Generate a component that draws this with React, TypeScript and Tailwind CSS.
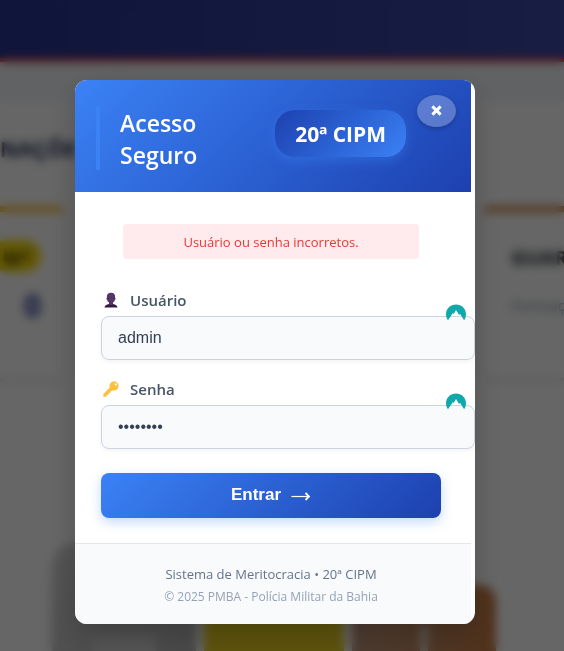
import React from "react";

function VpnBadge() {
  return (
    <svg className="pointer-events-none absolute -top-3 right-[9px] h-5 w-5" viewBox="0 0 20 20" aria-hidden="true">
      <path
        d="M2 16.200C.8 14.500 0 12.400 0 10.200 0 4.800 4.500 .6 10 .6s10 4.200 10 9.600c0 2.200-.7 4.300-1.900 6L14 9.800l-.9 1.500-1-2L10 6 7.800 9.900l-1-.8-.9 1.400z"
        fill="#0fa9a9"
      />
    </svg>
  );
}

function UserIcon() {
  return (
    <svg className="h-4 w-4 shrink-0" viewBox="0 0 16 16" aria-hidden="true">
      <path d="M1.500 15.500c.2-2 1.800-3.200 4.600-3.600h3.800c2.800.4 4.400 1.600 4.600 3.600z" fill="#321b41" />
      <path d="M8 .8c2.700 0 4.100 1.500 4.100 3.800v1.200c.7.3.6 1.800-.2 2-.3 1.300-.9 2.200-1.900 2.800v1.700L8 13.300l-2-1V10.600C5.100 10 4.400 9.100 4.100 7.800c-.8-.2-.9-1.700-.2-2V4.600C3.900 2.300 5.300.8 8 .8z" fill="#533566" />
    </svg>
  );
}

function KeyIcon() {
  return (
    <svg className="h-4 w-4 shrink-0" viewBox="0 0 16 16" aria-hidden="true">
      <path
        fillRule="evenodd"
        d="M11.200.2a4.700 4.700 0 0 0-4.400 6.300L.4 12.900v2.300c0 .4.300.6.600.6h2l.6-1.300 1.500-.4.400-1.600 1.700-.4.300-1.500 2-1.200A4.700 4.700 0 1 0 11.200.2zm1.600 2.100a1.100 1.100 0 1 1 0 2.200 1.100 1.100 0 0 1 0-2.200z"
        fill="#fcc03c"
      />
    </svg>
  );
}

function ArrowIcon() {
  return (
    <svg className="mt-[3px] h-3 w-5" viewBox="0 0 20 12" fill="none" stroke="white" aria-hidden="true">
      <path d="M.5 6.500H18" strokeWidth="1.200" />
      <path d="M14.500 3 18 6.500 14.500 10" strokeWidth="1.800" />
    </svg>
  );
}

function Backdrop() {
  return (
    <div className="h-screen overflow-hidden bg-white" aria-hidden="true">
      <div className="h-[62px] border-b-4 border-[#d32f2f] bg-linear-to-r from-[#283593] to-[#3c4ba8]" />
      <div className="h-10 bg-[#f1f5f9]" />
      <div className="flex h-[104px] pt-8">
        <div className="text-[22px] leading-7 font-bold text-[#1e2f55]">NAÇÕE</div>
      </div>
      <div className="flex justify-center gap-4 pr-4">
        <div className="flex h-[172px] w-[386px] flex-none flex-col items-end rounded-lg border-t-6 border-[#fbc02d] bg-white px-6 pt-7 shadow-md">
          <span className="rounded-full bg-[#f9dc0b] px-3 py-1 text-base font-bold text-[#3d3600]">igr!</span>
          <b className="pt-4 text-3xl text-[#303f9f]">0</b>
        </div>
        <div className="h-[172px] w-[386px] flex-none rounded-lg border-t-6 border-[#9e9e9e] bg-white shadow-md" />
        <div className="h-[172px] w-[386px] flex-none rounded-lg border-t-6 border-[#cd853f] bg-white px-7 pt-8 shadow-md">
          <b className="block text-xl text-[#263238]">GUAR</b>
          <span className="block pt-6 text-sm text-[#78909c]">Pontuaç</span>
        </div>
      </div>
      <div className="flex h-[273px] items-end justify-center gap-2 pr-4">
        <div className="h-[108px] w-[144px] rounded-t-3xl bg-linear-135 from-[#d4d4d4] to-[#b4b4b4] px-10 pt-[92px] shadow-xl">
          <div className="h-4 bg-[#d0d0d0]" />
        </div>
        <div className="h-[148px] w-[140px] rounded-t-2xl bg-[#e6cf20]" />
        <div className="flex h-[66px] w-[144px] justify-center rounded-t-2xl bg-linear-to-r from-[#bd947b] to-[#c97c42] pt-10">
          <div className="h-7 w-2 bg-[#ddd0c5]" />
        </div>
      </div>
    </div>
  );
}

type FieldProps = { id: string; label: string; type: string; value: string; icon: React.ReactNode };

function Field({ id, label, type, value, icon }: FieldProps) {
  return (
    <div>
      <label htmlFor={id} className="flex h-8 items-center gap-[11px] px-0.5 text-[15px] font-semibold text-[#475569]">
        {icon}
        {label}
      </label>
      <div className="relative -mr-[34px]">
        <input
          id={id}
          type={type}
          defaultValue={value}
          className="block h-11 w-full rounded-lg border border-[#cbd5e1] bg-[#f8fafc] px-4 font-['Liberation_Sans',Arial,sans-serif] text-base text-[#334155] shadow-[0_2px_4px_rgba(0,0,0,0.05)] outline-none"
        />
        <VpnBadge />
      </div>
    </div>
  );
}

export default function App() {
  return (
    <div className="relative font-['Open_Sans','Noto_Sans',sans-serif]">
      <Backdrop />
      <div className="fixed inset-0 flex items-start justify-center bg-black/60 pt-20 pr-3.5 backdrop-blur-[5px]">
        <div role="dialog" aria-labelledby="login-title" className="relative w-full max-w-[400px] overflow-hidden rounded-xl bg-white pr-1 shadow-[0_10px_30px_rgba(0,0,0,0.2)]">
          <header className="flex items-start justify-between bg-linear-135 from-[#3b82f6] to-[#1e40af] pt-[26px] pr-[65px] pb-[22px] pl-[21px]">
            <h2 id="login-title" className="h-16 w-32 border-l-4 border-[#3b82f6] pt-px pl-5 text-[23px] leading-8 font-semibold text-white">
              Acesso Seguro
            </h2>
            <span className="mt-1 flex h-[47px] items-center rounded-[20px] bg-linear-135 from-[#1e40af] to-[#3b82f6] px-5 pt-0.5 text-[21px] font-bold text-white shadow-[0_4px_12px_rgba(59,130,246,0.4)]">
              20ª CIPM
            </span>
            <button type="button" aria-label="Fechar" className="absolute top-[15px] right-[19px] flex h-8 w-[39px] items-center justify-center rounded-[50%] bg-white/25 pb-0.5 shadow-[0_2px_5px_rgba(0,0,0,0.2)]">
              <svg className="h-[11px] w-[11px]" viewBox="0 0 12 12" stroke="white" strokeWidth="3.200" aria-hidden="true">
                <path d="M1.500 1.500l9 9M10.500 1.500l-9 9" />
              </svg>
            </button>
          </header>

          <form className="pt-8 pr-[30px] pb-[25px] pl-[26px]" onSubmit={(e) => e.preventDefault()}>
            <p role="alert" className="mx-[22px] mb-[25px] flex h-[35px] items-center justify-center rounded bg-[#ffebee] pt-0.5 text-[13px] text-[#e53935]">
              Usuário ou senha incorretos.
            </p>
            <div className="flex flex-col gap-[13px]">
              <Field id="user" label="Usuário" type="text" value="admin" icon={<UserIcon />} />
              <Field id="pass" label="Senha" type="password" value="admin123" icon={<KeyIcon />} />
            </div>
            <button
              type="submit"
              className="mt-6 flex h-[45px] w-full items-center justify-center gap-2.5 rounded-lg bg-linear-135 from-[#3b82f6] to-[#1e40af] pb-0.5 font-['Liberation_Sans',Arial,sans-serif] text-[17px] font-bold text-white shadow-[0_4px_12px_rgba(59,130,246,0.3)]"
            >
              Entrar
              <ArrowIcon />
            </button>
          </form>

          <footer className="border-t border-[#e2e8f0] bg-[#f8fafc] pt-[18px] pr-1 pb-4 text-center">
            <p className="text-[13px] leading-6 text-[#64748b]">Sistema de Meritocracia • 20ª CIPM</p>
            <p className="text-[12px] leading-[22px] text-[#94a3b8]">© 2025 PMBA - Polícia Militar da Bahia</p>
          </footer>
        </div>
      </div>
    </div>
  );
}
